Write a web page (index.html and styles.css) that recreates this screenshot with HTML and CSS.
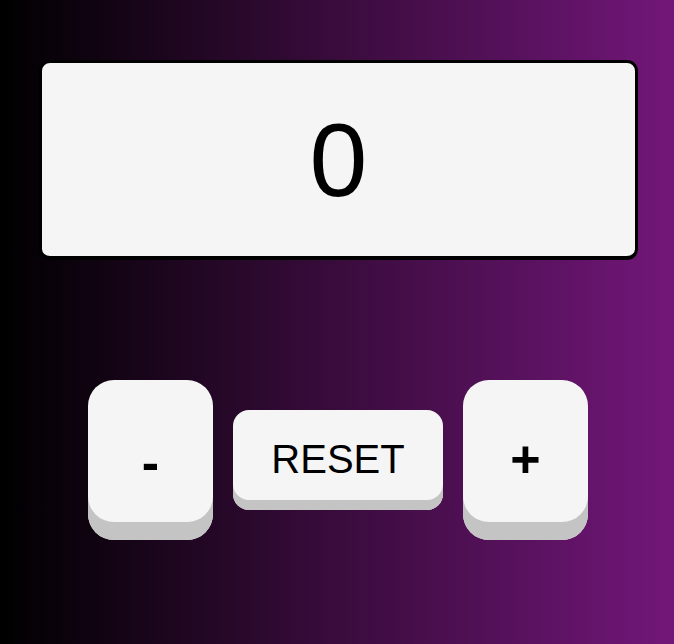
FILE: index.html
```html
<!DOCTYPE html>
<html lang="en">
<head>
<meta charset="utf-8">
<title>Counter</title>
<link rel="stylesheet" href="styles.css">
</head>
<body>
  <main class="app">
    <div class="display">0</div>
    <div class="controls">
      <button class="key key-sign key-minus">-</button>
      <button class="key key-reset">RESET</button>
      <button class="key key-sign key-plus">+</button>
    </div>
  </main>
</body>
</html>
```
FILE: styles.css
```css
html, body {
  margin: 0;
  height: 100%;
}
body {
  background: linear-gradient(to right, #000000, #721779);
  font-family: "Liberation Sans", Arial, sans-serif;
}
.app {
  display: flex;
  flex-direction: column;
  align-items: center;
  padding-top: 60px;
  padding-left: 3px;
}
.display {
  box-sizing: border-box;
  width: 599px;
  height: 200px;
  border: 3px solid #000;
  border-bottom-width: 4px;
  border-radius: 11px;
  background: #f5f5f5;
  color: #000;
  font-size: 104px;
  display: flex;
  align-items: center;
  justify-content: center;
  line-height: 1;
}
.controls {
  margin-top: 120px;
  display: flex;
  align-items: center;
  gap: 20px;
  margin-left: -1px;
}
.key {
  border: none;
  background: #f5f5f5;
  color: #000;
  font-family: "Liberation Sans", Arial, sans-serif;
  padding: 0;
  cursor: pointer;
}
.key-sign {
  width: 125px;
  height: 160px;
  border-radius: 26px;
  box-shadow: inset 0 -18px 0 #c4c4c4;
  font-size: 52px;
  font-weight: bold;
}
.key-minus {
  padding-top: 4px;
}
.key-plus {
  padding-bottom: 2px;
}
.key-reset {
  width: 210px;
  height: 100px;
  border-radius: 16px;
  box-shadow: inset 0 -10px 0 #c4c4c4;
  font-size: 40px;
  padding-bottom: 2px;
}
```
